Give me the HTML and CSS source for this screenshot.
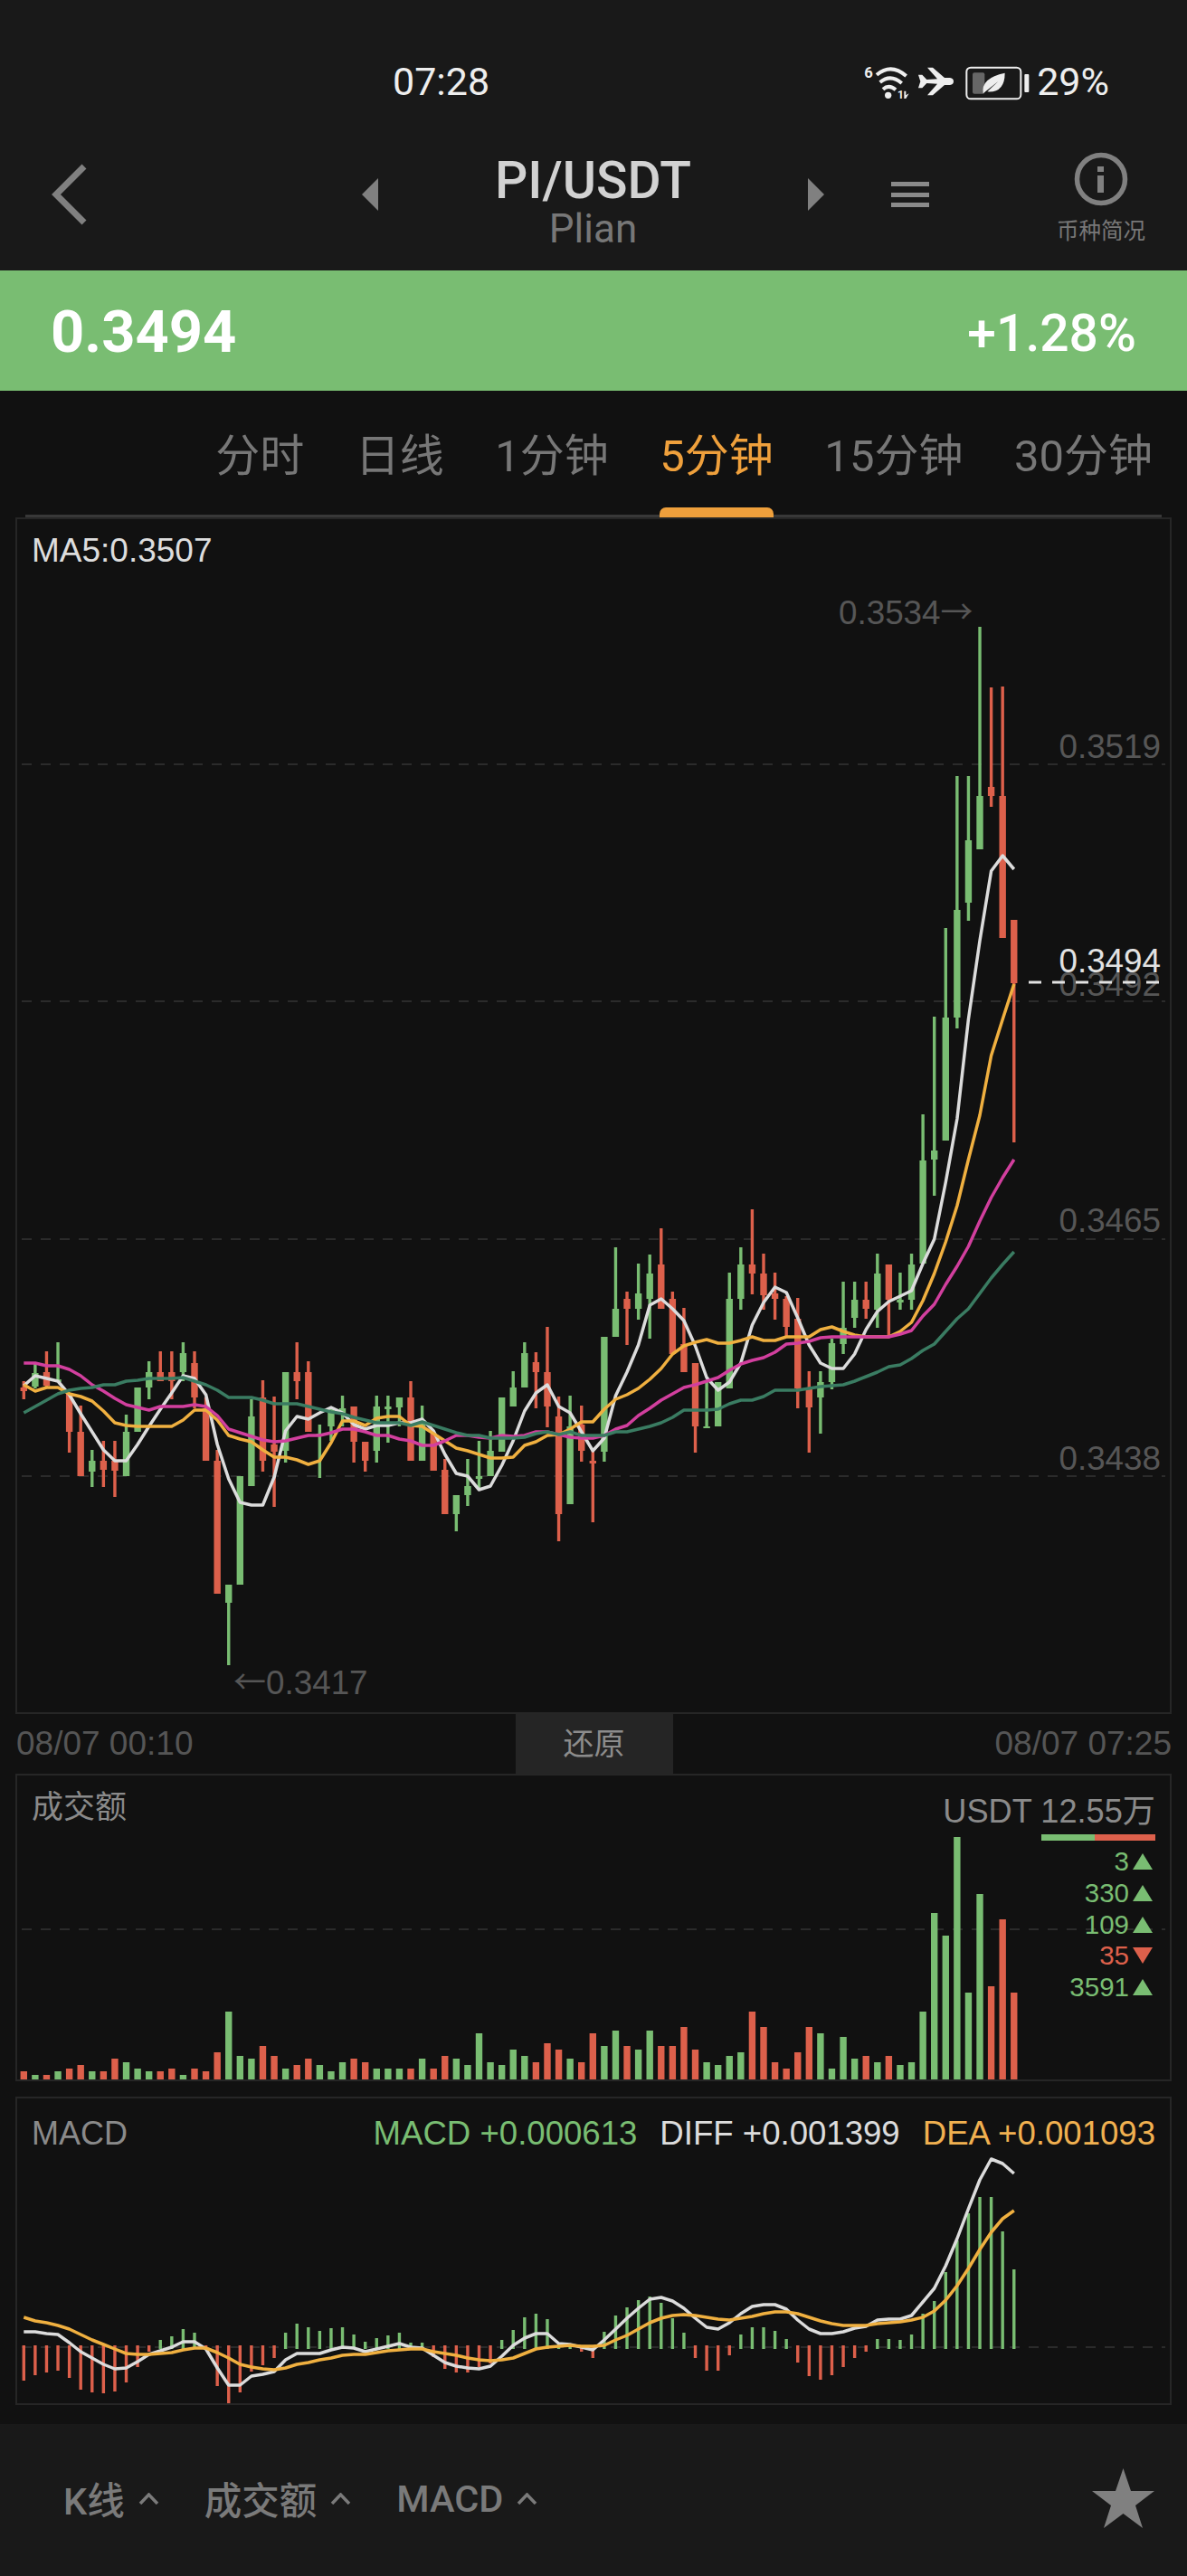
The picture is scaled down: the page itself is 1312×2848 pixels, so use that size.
FILE: index.html
```html
<!DOCTYPE html>
<html lang="zh">
  <head>
    <meta charset="UTF-8" />
    <meta name="viewport" content="width=device-width, initial-scale=1.0" />
    <title>PI/USDT</title>
    <link rel="stylesheet" href="styles.css">
  </head>
  <body>
    <div class="screen">
      <div class="top">
        <div class="status">
          <span class="clock">07:28</span>
          <div class="status-right">
            <svg class="status-icons" viewBox="165 15 555 141" width="185" height="47">
              <text class="st-six" x="166" y="72">6</text>
              <path class="st-wave" d="M207 62 Q255 22 305 66" />
              <path class="st-wave" d="M218 87 Q253 58 290 90" />
              <path class="st-wave" d="M228 110 Q248 92 270 112" />
              <circle class="st-fill" cx="245" cy="130" r="11" />
              <text class="st-one" x="276" y="141">1</text>
              <path class="st-fill" d="M298 116 h6 v14 l10 -6 l-10 17 h-6 z" />
              <path class="st-fill" d="M345 62 L358 62 L373 78 L408 76 L375 38 L393 38 L432 72 L450 72 Q462 74 462 84 Q462 94 450 96 L432 96 L393 130 L375 130 L408 92 L373 90 L358 106 L345 106 L352 84 Z" />
              <rect class="st-batt" x="505" y="38" width="180" height="104" rx="14" />
              <rect class="st-level" x="525" y="55" width="40" height="70" rx="6" />
              <path class="st-fill" d="M560 124 Q552 72 632 56 Q632 122 574 118 L610 84 Z" />
              <rect class="st-fill" x="697" y="60" width="15" height="60" rx="3" />
            </svg>
            <span class="battery-text">29%</span>
          </div>
        </div>
        <div class="nav">
          <svg class="back" viewBox="0 0 40 68" width="40" height="68">
            <polyline points="36,3 5,34 36,65" />
          </svg>
          <div class="tri tri-left"></div>
          <div class="pair">
            <div class="pair-name">PI/USDT</div>
            <div class="pair-sub">Plian</div>
          </div>
          <div class="tri tri-right"></div>
          <div class="menu"><i></i><i></i><i></i></div>
          <div class="info">
            <svg viewBox="0 0 60 60" width="60" height="60">
              <circle class="info-ring" cx="30" cy="30" r="26.5" />
              <rect class="info-mark" x="26" y="16" width="7" height="6" />
              <rect class="info-mark" x="26" y="26" width="7" height="19" />
            </svg>
            <span>币种简况</span>
          </div>
        </div>
      </div>

      <div class="price-bar">
        <span class="price">0.3494</span>
        <span class="change">+1.28%</span>
      </div>

      <div class="tabs">
        <div class="tab">分时</div>
        <div class="tab">日线</div>
        <div class="tab">1分钟</div>
        <div class="tab active">5分钟</div>
        <div class="tab">15分钟</div>
        <div class="tab">30分钟</div>
      </div>

      <div class="panel panel-main">
        <svg id="main-chart" class="plot" viewBox="19 574 1274 1319" width="1274" height="1319">
          <line class="grid" x1="24" x2="1288" y1="845" y2="845" />
          <line class="grid" x1="24" x2="1288" y1="1107" y2="1107" />
          <line class="grid" x1="24" x2="1288" y1="1370" y2="1370" />
          <line class="grid" x1="24" x2="1288" y1="1632" y2="1632" />
        </svg>
        <div class="ma-label">MA5:0.3507</div>
        <svg class="plot" viewBox="19 574 1274 1319" width="1274" height="1319">
          <text class="axis" x="1283" y="838" text-anchor="end">0.3519</text>
          <text class="axis" x="1283" y="1101" text-anchor="end">0.3492</text>
          <text class="axis" x="1283" y="1362" text-anchor="end">0.3465</text>
          <text class="axis" x="1283" y="1625" text-anchor="end">0.3438</text>
          <text class="axis" x="927" y="690">0.3534<tspan class="arrow">→</tspan></text>
          <text class="axis" x="258" y="1873"><tspan class="arrow">←</tspan>0.3417</text>
          <text class="last" x="1283" y="1075" text-anchor="end">0.3494</text>
          <line class="last-line" x1="1137" x2="1293" y1="1086" y2="1086" />
        </svg>
      </div>

      <div class="time-row">
        <span>08/07 00:10</span>
        <div class="reset">还原</div>
        <span>08/07 07:25</span>
      </div>

      <div class="panel panel-vol">
        <svg id="vol-chart" class="plot" viewBox="19 1963 1274 336" width="1274" height="336">
          <line class="grid" x1="24" x2="1288" y1="2133" y2="2133" />
        </svg>
        <div class="vol-head">
          <span class="panel-title">成交额</span>
          <div class="vol-side">
            <div class="vol-total">USDT 12.55万</div>
            <div class="ratio"><i class="ratio-up"></i><i class="ratio-down"></i></div>
            <div class="tick up">3<i></i></div>
            <div class="tick up">330<i></i></div>
            <div class="tick up">109<i></i></div>
            <div class="tick down">35<i></i></div>
            <div class="tick up">3591<i></i></div>
          </div>
        </div>
      </div>

      <div class="panel panel-macd">
        <svg id="macd-chart" class="plot" viewBox="19 2320 1274 337" width="1274" height="337">
          <line class="grid" x1="24" x2="1288" y1="2595" y2="2595" />
        </svg>
        <div class="macd-head">
          <span class="panel-title macd-title">MACD</span>
          <div class="macd-values">
            <span class="v-macd">MACD +0.000613</span>
            <span class="v-diff">DIFF +0.001399</span>
            <span class="v-dea">DEA +0.001093</span>
          </div>
        </div>
      </div>

      <div class="bottom">
        <div class="pick">K线<svg viewBox="0 0 23 13" width="23" height="13"><polyline points="2,12 11.5,2 21,12" /></svg></div>
        <div class="pick">成交额<svg viewBox="0 0 23 13" width="23" height="13"><polyline points="2,12 11.5,2 21,12" /></svg></div>
        <div class="pick">MACD<svg viewBox="0 0 23 13" width="23" height="13"><polyline points="2,12 11.5,2 21,12" /></svg></div>
        <svg class="star" viewBox="0 0 69 66" width="69" height="66">
          <polygon points="34.5,0 43,25 69,25 48,41 56,66 34.5,50 13,66 21,41 0,25 26,25" />
        </svg>
      </div>
    </div>
    <script src="chart.js"></script>
  </body>
</html>
```

FILE: styles.css
```css
* {
  box-sizing: border-box;
}
body {
  margin: 0;
  background-color: #111;
}
.screen {
  width: 1312px;
  height: 2848px;
  display: flex;
  flex-direction: column;
  background-color: #111;
  font-family: Roboto, "Noto Sans CJK SC", sans-serif;
  overflow: hidden;
}

/* header */
.top {
  height: 299px;
  background-color: #191919;
}
.status {
  height: 150px;
  padding: 30px 86px 0 434px;
  display: flex;
  align-items: center;
  justify-content: space-between;
  color: #eee;
  font-size: 43px;
}
.status-right {
  display: flex;
  align-items: center;
  gap: 6px;
}
.st-six {
  font: bold 50px Roboto, sans-serif;
  fill: #eee;
}
.st-one {
  font: bold 36px Roboto, sans-serif;
  fill: #eee;
}
.st-wave {
  fill: none;
  stroke: #eee;
  stroke-width: 12;
}
.st-fill {
  fill: #eee;
}
.st-batt {
  fill: none;
  stroke: #eee;
  stroke-width: 6;
}
.st-level {
  fill: #666;
}
.nav {
  height: 149px;
  display: flex;
  align-items: flex-start;
  padding-left: 57px;
}
.back {
  margin-top: 31px;
}
.back polyline {
  fill: none;
  stroke: #808080;
  stroke-width: 7;
}
.tri {
  width: 0;
  height: 0;
  margin-top: 47px;
  border-top: 18px solid transparent;
  border-bottom: 18px solid transparent;
}
.tri-left {
  margin-left: 303px;
  border-right: 18px solid #808080;
}
.tri-right {
  border-left: 18px solid #808080;
}
.pair {
  width: 475px;
  margin-top: 19px;
  text-align: center;
}
.pair-name {
  font-size: 57px;
  font-weight: 500;
  line-height: 62px;
  color: #d2d2d2;
}
.pair-sub {
  font-size: 44px;
  line-height: 45px;
  color: #777;
}
.menu {
  width: 42px;
  margin: 51px 0 0 74px;
  display: flex;
  flex-direction: column;
  gap: 6.5px;
}
.menu i {
  display: block;
  height: 5px;
  background-color: #8a8a8a;
}
.info {
  width: 100px;
  margin: 18px 0 0 140px;
  display: flex;
  flex-direction: column;
  align-items: center;
  color: #777;
  font-size: 24.5px;
  line-height: 36px;
}
.info span {
  margin-top: 10px;
}
.info-ring {
  fill: none;
  stroke: #808080;
  stroke-width: 5.5;
}
.info-mark {
  fill: #808080;
}

/* price */
.price-bar {
  height: 133px;
  padding: 0 56px 0 56px;
  display: flex;
  align-items: center;
  justify-content: space-between;
  background-color: #79bd72;
  color: #fff;
}
.price {
  padding-top: 3px;
  font-size: 65px;
  font-weight: 700;
}
.change {
  padding-top: 6px;
  font-size: 57px;
  font-weight: 500;
}

/* period tabs */
.tabs {
  height: 140px;
  margin: 0 28px;
  padding: 42px 10px 0 0;
  display: flex;
  justify-content: flex-end;
  gap: 56.5px;
  border-bottom: 3px solid #383838;
}
.tab {
  height: 95px;
  position: relative;
  font-size: 49px;
  line-height: 62px;
  color: #777;
}
.tab.active {
  color: #efa03c;
}
.tab.active::after {
  content: "";
  position: absolute;
  left: 0;
  right: 0;
  bottom: -3px;
  height: 11px;
  background-color: #efa03c;
  border-radius: 7px 7px 0 0;
}

/* chart panels */
.panel {
  position: relative;
  margin: 0 17px;
  border: 2px solid #262626;
}
.panel-main {
  height: 1323px;
}
.panel-vol {
  height: 340px;
}
.panel-macd {
  height: 341px;
  margin-top: 17px;
}
.plot {
  position: absolute;
  left: 0;
  top: 0;
}
.grid {
  stroke: #2b2b2b;
  stroke-width: 2;
  stroke-dasharray: 11 10;
}
.axis {
  font: 36.8px "Liberation Sans", sans-serif;
  fill: #565656;
}
.arrow {
  font-family: "Noto Sans CJK SC", sans-serif;
  font-size: 36px;
}
.last {
  font: 36.8px "Liberation Sans", sans-serif;
  fill: #e2e2e2;
}
.last-line {
  stroke: #e2e2e2;
  stroke-width: 3;
  stroke-dasharray: 14 12;
}
.ma-label {
  position: relative;
  padding: 10px 0 0 16px;
  font: 37px/50px "Liberation Sans", sans-serif;
  color: #ddd;
}
.time-row {
  height: 66px;
  margin: 0 17px;
  padding: 0 0 0 1px;
  display: flex;
  justify-content: space-between;
  font: 37px/65px "Liberation Sans", sans-serif;
  color: #555;
}
.reset {
  width: 174px;
  background-color: #252525;
  text-align: center;
  font-family: "Noto Sans CJK SC", sans-serif;
  font-size: 34px;
  line-height: 62px;
  color: #8c8c8c;
}
.panel-title {
  font-family: "Liberation Sans", "Noto Sans CJK SC", sans-serif;
  font-size: 35px;
  line-height: 40px;
  color: #8a8a8a;
}
.macd-title {
  font-size: 36px;
}
.vol-head {
  position: relative;
  display: flex;
  justify-content: space-between;
  padding: 15px 16px 0 16px;
}
.vol-side {
  width: 150px;
  padding-top: 5px;
  display: flex;
  flex-direction: column;
  align-items: flex-end;
  font-family: "Liberation Sans", "Noto Sans CJK SC", sans-serif;
}
.vol-total {
  font-size: 36.2px;
  line-height: 40px;
  white-space: nowrap;
  color: #8a8a8a;
}
.ratio {
  width: 126px;
  height: 7px;
  margin: 5px 0 6px;
  display: flex;
}
.ratio-up {
  width: 59px;
  background-color: #79bd72;
}
.ratio-down {
  flex: 1;
  background-color: #dd604b;
}
.tick {
  height: 34.7px;
  margin-right: 3px;
  display: flex;
  align-items: center;
  gap: 4px;
  font-size: 29.5px;
}
.tick.up {
  color: #79bd72;
}
.tick.down {
  color: #dd604b;
}
.tick i {
  width: 0;
  height: 0;
  border-left: 11px solid transparent;
  border-right: 11px solid transparent;
}
.tick.up i {
  border-bottom: 18px solid #79bd72;
}
.tick.down i {
  border-top: 18px solid #dd604b;
}
.macd-head {
  position: relative;
  display: flex;
  justify-content: space-between;
  padding: 19px 16px 0 16px;
}
.macd-values {
  display: flex;
  gap: 25px;
  font: 36.6px/40px "Liberation Sans", sans-serif;
}
.v-macd {
  color: #79bd72;
}
.v-diff {
  color: #dcdcdc;
}
.v-dea {
  color: #f0b050;
}

/* bottom bar */
.bottom {
  height: 168px;
  margin-top: 21px;
  padding: 0 36px 4px 70px;
  display: flex;
  align-items: center;
  gap: 50px;
  background-color: #191919;
}
.pick {
  display: flex;
  align-items: center;
  gap: 15px;
  font-size: 41.5px;
  font-weight: 500;
  color: #7a7a7a;
}
.pick polyline {
  fill: none;
  stroke: #7a7a7a;
  stroke-width: 3.5;
}
.star {
  margin-left: auto;
}
.star polygon {
  fill: #808080;
}
```

FILE: chart.js
```js
var GREEN = "#79bd72";
var RED = "#dd604b";
var NS = "http://www.w3.org/2000/svg";

// x of candle number i, same spacing in all three charts
function barX(i) {
  return 26.3 + 12.58 * i;
}

function add(svg, name, attrs) {
  var el = document.createElementNS(NS, name);
  for (var key in attrs) {
    el.setAttribute(key, attrs[key]);
  }
  svg.appendChild(el);
  return el;
}

function line(svg, ys, color) {
  var points = [];
  for (var i = 0; i < ys.length; i++) {
    points.push(barX(i).toFixed(1) + "," + ys[i]);
  }
  add(svg, "polyline", {
    points: points.join(" "),
    fill: "none",
    stroke: color,
    "stroke-width": 3.5,
    "stroke-linejoin": "round",
  });
}

// colour, high, body top, body bottom, low (all in page pixels)
var candles = [
  ["r", 1527, 1534, 1538, 1547], ["g", 1508, 1518, 1533, 1535], ["r", 1494, 1517, 1532, 1533], ["g", 1484, 1525, 1528, 1528],
  ["r", 1540, 1540, 1583, 1606], ["r", 1554, 1583, 1632, 1632], ["g", 1603, 1615, 1627, 1644], ["r", 1593, 1615, 1625, 1644],
  ["r", 1593, 1615, 1626, 1655], ["g", 1564, 1583, 1632, 1632], ["g", 1534, 1534, 1583, 1583], ["g", 1505, 1517, 1534, 1547],
  ["r", 1494, 1517, 1527, 1527], ["r", 1494, 1517, 1527, 1547], ["g", 1484, 1496, 1517, 1527], ["r", 1494, 1507, 1545, 1557],
  ["r", 1545, 1557, 1615, 1615], ["r", 1603, 1615, 1762, 1762], ["g", 1752, 1752, 1772, 1841], ["g", 1632, 1632, 1752, 1752],
  ["g", 1547, 1566, 1643, 1643], ["r", 1526, 1545, 1615, 1627], ["r", 1544, 1597, 1605, 1666], ["g", 1517, 1517, 1604, 1617],
  ["r", 1484, 1517, 1527, 1547], ["r", 1505, 1517, 1583, 1583], ["g", 1575, 1585, 1588, 1634], ["g", 1555, 1557, 1577, 1593],
  ["g", 1543, 1557, 1562, 1577], ["r", 1555, 1555, 1594, 1617], ["r", 1594, 1594, 1615, 1627], ["g", 1543, 1555, 1604, 1617],
  ["g", 1543, 1555, 1558, 1595], ["g", 1545, 1545, 1556, 1577], ["r", 1527, 1545, 1615, 1615], ["g", 1554, 1570, 1615, 1615],
  ["r", 1583, 1585, 1626, 1626], ["r", 1613, 1625, 1674, 1674], ["g", 1653, 1653, 1674, 1693], ["g", 1613, 1643, 1653, 1665],
  ["g", 1593, 1632, 1635, 1645], ["g", 1582, 1604, 1632, 1632], ["g", 1545, 1545, 1605, 1605], ["g", 1516, 1534, 1555, 1555],
  ["g", 1484, 1496, 1534, 1534], ["r", 1495, 1506, 1517, 1557], ["r", 1467, 1517, 1555, 1578], ["r", 1544, 1566, 1674, 1704],
  ["g", 1543, 1577, 1663, 1663], ["r", 1554, 1575, 1604, 1616], ["r", 1604, 1615, 1618, 1683], ["g", 1478, 1478, 1605, 1616],
  ["g", 1379, 1447, 1478, 1478], ["r", 1428, 1436, 1447, 1487], ["g", 1397, 1430, 1447, 1459], ["g", 1387, 1408, 1436, 1480],
  ["r", 1358, 1398, 1447, 1447], ["r", 1428, 1436, 1497, 1497], ["r", 1446, 1486, 1517, 1517], ["r", 1507, 1507, 1577, 1606],
  ["g", 1527, 1577, 1579, 1579], ["g", 1528, 1528, 1577, 1577], ["g", 1407, 1436, 1535, 1535], ["g", 1379, 1398, 1436, 1448],
  ["r", 1337, 1398, 1408, 1431], ["r", 1386, 1408, 1432, 1448], ["r", 1407, 1430, 1436, 1459], ["r", 1433, 1436, 1467, 1477],
  ["r", 1435, 1458, 1535, 1557], ["r", 1516, 1535, 1556, 1606], ["g", 1516, 1528, 1545, 1585], ["g", 1480, 1485, 1528, 1536],
  ["g", 1417, 1468, 1486, 1497], ["g", 1417, 1437, 1457, 1468], ["r", 1417, 1437, 1447, 1458], ["g", 1386, 1408, 1448, 1468],
  ["r", 1398, 1398, 1437, 1478], ["g", 1407, 1437, 1440, 1448], ["g", 1386, 1398, 1437, 1448], ["g", 1232, 1283, 1397, 1397],
  ["g", 1124, 1272, 1282, 1322], ["g", 1026, 1125, 1261, 1261], ["g", 858, 1006, 1125, 1137], ["g", 858, 929, 998, 1018],
  ["g", 693, 880, 939, 939], ["r", 760, 870, 880, 892], ["r", 759, 880, 1037, 1037], ["r", 1017, 1017, 1087, 1263],
];

var ma5 = [
  1532, 1521, 1524, 1527, 1542, 1563, 1583, 1603, 1615, 1615, 1597, 1577, 1558, 1540, 1521, 1524, 1542, 1597, 1635, 1661, 1664, 1664,
  1633, 1582, 1566, 1569, 1562, 1556, 1562, 1575, 1580, 1576, 1576, 1573, 1573, 1569, 1582, 1608, 1629, 1632, 1647, 1643, 1620, 1593,
  1560, 1540, 1531, 1555, 1562, 1583, 1604, 1590, 1543, 1517, 1487, 1443, 1436, 1447, 1460, 1488, 1523, 1537, 1528, 1507, 1465, 1440,
  1423, 1429, 1457, 1487, 1507, 1513, 1513, 1497, 1470, 1450, 1439, 1433, 1427, 1397, 1370, 1307, 1237, 1127, 1040, 963, 946, 961,
];
var ma10 = [
  1531, 1538, 1534, 1534, 1541, 1544, 1549, 1560, 1573, 1576, 1577, 1577, 1577, 1577, 1570, 1559, 1559, 1570, 1587, 1591, 1594, 1603,
  1611, 1611, 1614, 1619, 1615, 1595, 1571, 1571, 1576, 1568, 1566, 1566, 1576, 1577, 1585, 1593, 1601, 1604, 1608, 1612, 1612, 1611,
  1598, 1594, 1587, 1586, 1580, 1572, 1572, 1558, 1547, 1542, 1535, 1525, 1513, 1497, 1488, 1484, 1481, 1485, 1485, 1482, 1478, 1482,
  1482, 1478, 1478, 1478, 1470, 1467, 1472, 1476, 1478, 1478, 1478, 1472, 1462, 1438, 1408, 1373, 1333, 1282, 1233, 1167, 1127, 1088,
];
var ma20 = [
  1507, 1507, 1510, 1510, 1514, 1521, 1531, 1538, 1546, 1553, 1556, 1559, 1555, 1555, 1555, 1553, 1555, 1565, 1580, 1584, 1588, 1592,
  1594, 1593, 1590, 1587, 1587, 1584, 1580, 1580, 1583, 1587, 1587, 1591, 1593, 1598, 1598, 1593, 1587, 1587, 1589, 1590, 1587, 1588,
  1587, 1583, 1583, 1586, 1589, 1590, 1590, 1587, 1580, 1576, 1565, 1557, 1548, 1541, 1534, 1531, 1527, 1523, 1515, 1508, 1504, 1501,
  1495, 1486, 1485, 1483, 1479, 1478, 1478, 1478, 1478, 1478, 1478, 1475, 1471, 1455, 1442, 1420, 1400, 1378, 1350, 1324, 1302, 1282,
];
var ma30 = [
  1562, 1555, 1548, 1541, 1537, 1535, 1534, 1531, 1531, 1527, 1526, 1524, 1524, 1524, 1523, 1527, 1531, 1537, 1545, 1545, 1545, 1548,
  1552, 1552, 1552, 1555, 1558, 1561, 1563, 1567, 1570, 1573, 1573, 1573, 1576, 1572, 1576, 1580, 1584, 1587, 1587, 1590, 1590, 1590,
  1589, 1585, 1583, 1586, 1583, 1587, 1587, 1587, 1583, 1583, 1580, 1577, 1573, 1567, 1559, 1559, 1559, 1558, 1552, 1548, 1548, 1544,
  1537, 1537, 1537, 1535, 1533, 1532, 1531, 1527, 1522, 1517, 1511, 1509, 1502, 1493, 1486, 1472, 1458, 1447, 1430, 1413, 1398, 1384,
];

// height of each volume bar, negative = red
var volumes = [
  -9, 5, -5, 9, -12, -16, 9, -9, -23, 19, 12, 9, -9, -12, 5, -12, -9, -30, 75, 26, 23, -37, -26, 12, -16, -23, 16, 9, 19, -23,
  -19, 12, 12, 12, -12, 23, -12, -26, 23, 16, 51, 19, 16, 33, 26, -19, -40, -33, 23, -19, -51, 37, 54, -37, 33, 54, -37, -37,
  -58, -33, 19, 16, 26, 30, -75, -58, -19, -12, -30, -58, 51, 12, 47, 23, -26, 19, -26, 16, 19, 75, 184, 159, 268, 96, 205, -103, -177, -96,
];

// macd bars and lines, pixels above the zero line
var macdBars = [
  -37, -31, -28, -26, -34, -47, -50, -51, -49, -39, -22, -5, 8, 12, 20, 16, -3, -43, -62, -50, -27, -20, -12, 16, 26, 22, 18, 21, 22, 14,
  6, 10, 13, 16, 5, 5, -11, -24, -28, -28, -22, -18, 8, 19, 33, 37, 31, 3, 3, -5, -12, 17, 35, 44, 52, 56, 49, 32, 16, -12, -26, -26, -9,
  14, 22, 22, 18, 9, -17, -32, -36, -31, -22, -12, -5, 9, 9, 8, 14, 37, 51, 83, 118, 148, 166, 166, 128, 86,
];
var diff = [
  17, 17, 15, 14, 5, -5, -12, -19, -24, -23, -16, -8, -4, 0, 6, 6, -2, -23, -42, -42, -32, -30, -27, -14, -7, -7, -7, -3, 0, -1, -5, -2,
  1, 4, 0, -1, -9, -17, -21, -23, -24, -21, -10, 2, 10, 15, 15, 4, 3, 0, -3, 8, 20, 32, 43, 53, 55, 51, 43, 32, 22, 20, 27, 37, 45, 47,
  47, 42, 30, 20, 15, 15, 17, 21, 23, 30, 31, 31, 35, 50, 65, 90, 120, 153, 185, 208, 203, 192,
];
var dea = [
  33, 29, 27, 24, 20, 14, 8, 3, -2, -7, -8, -8, -7, -6, -3, -1, -1, -6, -12, -19, -22, -24, -25, -23, -19, -17, -14, -12, -9, -8, -8, -6,
  -4, -3, -2, -2, -5, -7, -9, -12, -14, -15, -14, -12, -7, -2, 0, 1, 2, 1, 1, 2, 8, 13, 20, 27, 32, 35, 36, 35, 33, 31, 30, 32, 34, 37,
  39, 39, 37, 33, 29, 26, 24, 24, 24, 26, 27, 28, 30, 33, 40, 52, 68, 87, 108, 127, 142, 151,
];

var mainChart = document.getElementById("main-chart");
for (var c = 0; c < candles.length; c++) {
  var item = candles[c];
  var color = item[0] == "g" ? GREEN : RED;
  var cx = barX(c);
  add(mainChart, "rect", { x: cx - 1.7, y: item[1], width: 3.4, height: item[4] - item[1], fill: color });
  add(mainChart, "rect", { x: cx - 3.7, y: item[2], width: 7.4, height: item[3] - item[2], fill: color });
}
line(mainChart, ma5, "#dcdcdc");
line(mainChart, ma10, "#f0b040");
line(mainChart, ma20, "#d23f9e");
line(mainChart, ma30, "#3a7c62");

var volChart = document.getElementById("vol-chart");
for (var v = 0; v < volumes.length; v++) {
  var h = Math.abs(volumes[v]);
  add(volChart, "rect", {
    x: barX(v) - 3.7,
    y: 2299 - h,
    width: 7.4,
    height: h,
    fill: volumes[v] > 0 ? GREEN : RED,
  });
}

var macdChart = document.getElementById("macd-chart");
var ZERO = 2595;
for (var m = 0; m < macdBars.length; m++) {
  var value = macdBars[m];
  add(macdChart, "rect", {
    x: barX(m) - 1.7,
    y: value > 0 ? ZERO - value : ZERO - 2,
    width: 3.4,
    height: Math.abs(value) + 2,
    fill: value > 0 ? GREEN : RED,
  });
}
function fromZero(values) {
  return values.map(function (n) {
    return ZERO - n;
  });
}
line(macdChart, fromZero(diff), "#dcdcdc");
line(macdChart, fromZero(dea), "#f0b040");
```
